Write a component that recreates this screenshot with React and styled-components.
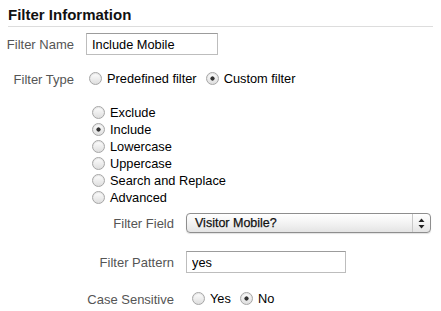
import React from 'react';
import styled, { createGlobalStyle } from 'styled-components';

const GlobalStyle = createGlobalStyle`
  body {
    margin: 0;
    background: #fff;
    font-family: "Liberation Sans", Arial, sans-serif;
  }
`;

const Panel = styled.div`
  width: 425px;
  padding: 6px 8px 0;
`;

const Title = styled.h2`
  margin: 0;
  padding-bottom: 2px;
  font-size: 15px;
  line-height: 18px;
  font-weight: bold;
  color: #111;
  border-bottom: 1px solid #ddd;
`;

const Row = styled.div`
  display: grid;
  grid-template-columns: ${(p) => p.$labelWidth}px auto;
  column-gap: 12px;
  align-items: center;
  justify-content: start;
  margin-top: ${(p) => p.$top}px;
  margin-left: ${(p) => p.$indent || 0}px;
  min-height: ${(p) => p.$height || 20}px;
`;

const Label = styled.span`
  text-align: right;
  white-space: nowrap;
  direction: rtl;
  font-size: 13px;
  color: #555;
  padding-top: ${(p) => p.$drop || 0}px;
`;

const TextInput = styled.input`
  box-sizing: border-box;
  width: ${(p) => p.$width}px;
  height: 22px;
  margin: 0;
  padding: 0 5px;
  border: 1px solid #bdbdbd;
  border-top-color: #9c9c9c;
  font-family: "Liberation Sans", Arial, sans-serif;
  font-size: 12.8px;
  color: #000;
  outline: none;
`;

const RadioGroup = styled.div`
  display: flex;
  align-items: center;
  gap: 9px;
  padding-left: ${(p) => p.$pad || 0}px;
`;

const RadioList = styled.div`
  display: flex;
  flex-direction: column;
  margin: 16px 0 0 84px;
`;

const Option = styled.label`
  display: flex;
  align-items: center;
  gap: 5px;
  height: 17px;
  font-size: 12.8px;
  color: #000;
  white-space: nowrap;
`;

const Radio = styled.input.attrs({ type: 'radio' })`
  appearance: none;
  box-sizing: border-box;
  width: 13px;
  height: 13px;
  margin: 0;
  border-radius: 50%;
  border: 1px solid #a6a6a6;
  background: linear-gradient(#fefefe, #dedede);
  box-shadow: inset 0 1px 1px rgba(0, 0, 0, 0.1);

  &:checked {
    background: radial-gradient(circle, #333 0 1.8px, transparent 2.4px),
      linear-gradient(#fefefe, #dedede);
  }
`;

const Select = styled.div`
  box-sizing: border-box;
  display: flex;
  align-items: center;
  width: 245px;
  height: 20px;
  border: 1px solid #8e8e8e;
  border-radius: 4px;
  background: linear-gradient(#ffffff, #f3f3f3 50%, #e4e4e4);
  box-shadow: 0 1px 1px rgba(0, 0, 0, 0.12);
`;

const SelectValue = styled.span`
  flex: 1;
  padding-left: 8px;
  font-size: 12.5px;
  color: #111;
  -webkit-text-stroke: 0.25px #111;
`;

const SelectArrows = styled.span`
  display: flex;
  align-items: center;
  justify-content: center;
  width: 17px;
  height: 18px;
  border-left: 1px solid #c8c8c8;
`;

const RadioItem = ({ name, label, checked }) => (
  <Option>
    <Radio name={name} defaultChecked={checked} />
    {label}
  </Option>
);

const ruleTypes = [
  'Exclude',
  'Include',
  'Lowercase',
  'Uppercase',
  'Search and Replace',
  'Advanced',
];

const App = () => (
  <>
    <GlobalStyle />
    <Panel>
      <Title>Filter Information</Title>

      <Row $labelWidth={66} $top={6} $height={22}>
        <Label>Filter Name</Label>
        <TextInput $width={132} defaultValue="Include Mobile" />
      </Row>

      <Row $labelWidth={66} $top={13}>
        <Label $drop={3}>Filter Type</Label>
        <RadioGroup $pad={3}>
          <RadioItem name="kind" label="Predefined filter" />
          <RadioItem name="kind" label="Custom filter" checked />
        </RadioGroup>
      </Row>

      <RadioList>
        {ruleTypes.map((t) => (
          <RadioItem key={t} name="rule" label={t} checked={t === 'Include'} />
        ))}
      </RadioList>

      <Row $labelWidth={88} $indent={78} $top={7}>
        <Label>Filter Field</Label>
        <Select>
          <SelectValue>Visitor Mobile?</SelectValue>
          <SelectArrows>
            <svg width="7" height="11" viewBox="0 0 7 11">
              <path d="M3.5 0.5 L6.5 4 L0.5 4 Z" fill="#222" />
              <path d="M0.5 7 L6.5 7 L3.5 10.5 Z" fill="#222" />
            </svg>
          </SelectArrows>
        </Select>
      </Row>

      <Row $labelWidth={88} $indent={78} $top={18} $height={22}>
        <Label>Filter Pattern</Label>
        <TextInput $width={160} defaultValue="yes" />
      </Row>

      <Row $labelWidth={88} $indent={78} $top={15}>
        <Label $drop={2}>Case Sensitive</Label>
        <RadioGroup $pad={6}>
          <RadioItem name="case" label="Yes" />
          <RadioItem name="case" label="No" checked />
        </RadioGroup>
      </Row>
    </Panel>
  </>
);

export default App;
